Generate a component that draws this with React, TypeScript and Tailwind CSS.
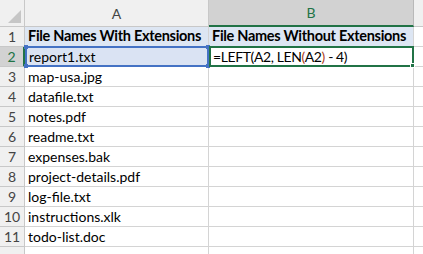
import React from "react";

const rows = [
  "File Names With Extensions",
  "report1.txt",
  "map-usa.jpg",
  "datafile.txt",
  "notes.pdf",
  "readme.txt",
  "expenses.bak",
  "project-details.pdf",
  "log-file.txt",
  "instructions.xlk",
  "todo-list.doc",
];

const font = { fontFamily: "Lato, 'Open Sans', sans-serif" };

export default function App() {
  return (
    <div
      className="w-[423px] h-[254px] overflow-hidden bg-white text-[14px] text-black whitespace-nowrap"
      style={font}
    >
      {/* header row */}
      <div className="flex h-[27px]">
        <div className="relative w-[25px] shrink-0 border-r border-b border-[#c8c8c8] bg-[#f0f0f0]">
          <svg className="absolute right-[3px] bottom-[3px]" width="13" height="13" viewBox="0 0 13 13">
            <polygon points="13,0 13,13 0,13" fill="#c6c6c6" />
          </svg>
        </div>
        <div className="w-[184px] shrink-0 flex items-center justify-center border-r border-b border-[#c8c8c8] bg-[#f0f0f0] text-[#444] text-[14px]">
          A
        </div>
        <div className="w-[205px] shrink-0 flex items-center justify-center border-r border-[#b9b9b9] border-b-2 border-b-[#217346] bg-[#d2d2d2] text-[#217346] text-[14px]">
          B
        </div>
        <div className="flex-1 border-b border-[#c8c8c8] bg-[#f0f0f0]" />
      </div>
      {rows.map((r, i) => {
        const n = i + 1;
        const isHeader = n === 1;
        const isActive = n === 2;
        return (
          <div key={n} className="flex h-[20px]">
            <div
              className={
                isActive
                  ? "w-[25px] shrink-0 flex items-center justify-center border-b border-[#c8c8c8] border-r-2 border-r-[#217346] bg-[#d2d2d2] text-[#217346] text-[14px]"
                  : "w-[25px] shrink-0 flex items-center justify-center border-r border-b border-[#c8c8c8] bg-[#f0f0f0] text-[#444] text-[14px]"
              }
            >
              {n}
            </div>
            {isActive ? (
              <div className="relative w-[184px] shrink-0 flex items-center pl-[2px] bg-[#dae3f3] border-2 border-[#4472c4] -mt-[1px] h-[21px]">
                <span className="leading-none">{r}</span>
                <span className="absolute -left-[3px] -top-[3px] w-[4px] h-[4px] bg-[#4472c4]" />
                <span className="absolute -right-[3px] -top-[3px] w-[4px] h-[4px] bg-[#4472c4]" />
                <span className="absolute -left-[3px] -bottom-[3px] w-[4px] h-[4px] bg-[#4472c4]" />
                <span className="absolute -right-[3px] -bottom-[3px] w-[4px] h-[4px] bg-[#4472c4]" />
              </div>
            ) : (
              <div
                className={
                  "w-[184px] shrink-0 flex items-center pl-[3px] border-r border-b border-[#d4d4d4] " +
                  (isHeader ? "bg-[#dde6f3] font-bold text-[14.5px] tracking-[-0.3px]" : "bg-white")
                }
              >
                <span className="leading-none">{r}</span>
              </div>
            )}
            {isActive ? (
              <div className="relative w-[205px] shrink-0 flex items-center pl-[2px] border-2 border-[#217346] -mt-[1px] h-[21px] bg-white">
                <span className="leading-none tracking-[-0.4px]">
                  =LEFT(A2, LEN<span className="text-[#b04020]">(</span>A2<span className="text-[#b04020]">)</span> - 4)
                </span>
                <span className="absolute -right-[3px] -bottom-[3px] w-[5px] h-[5px] bg-[#217346] border border-white" />
              </div>
            ) : (
              <div
                className={
                  "w-[205px] shrink-0 flex items-center pl-[3px] border-r border-b border-[#d4d4d4] " +
                  (isHeader ? "bg-[#dde6f3] font-bold text-[14.5px] tracking-[-0.3px]" : "bg-white")
                }
              >
                {isHeader ? <span className="leading-none">File Names Without Extensions</span> : null}
              </div>
            )}
            <div className="flex-1 border-b border-[#d4d4d4] bg-white" />
          </div>
        );
      })}
      <div className="flex h-[20px]">
        <div className="w-[25px] shrink-0 border-r border-[#c8c8c8] bg-[#f0f0f0]" />
        <div className="w-[184px] shrink-0 border-r border-[#d4d4d4]" />
        <div className="w-[205px] shrink-0 border-r border-[#d4d4d4]" />
      </div>
    </div>
  );
}
